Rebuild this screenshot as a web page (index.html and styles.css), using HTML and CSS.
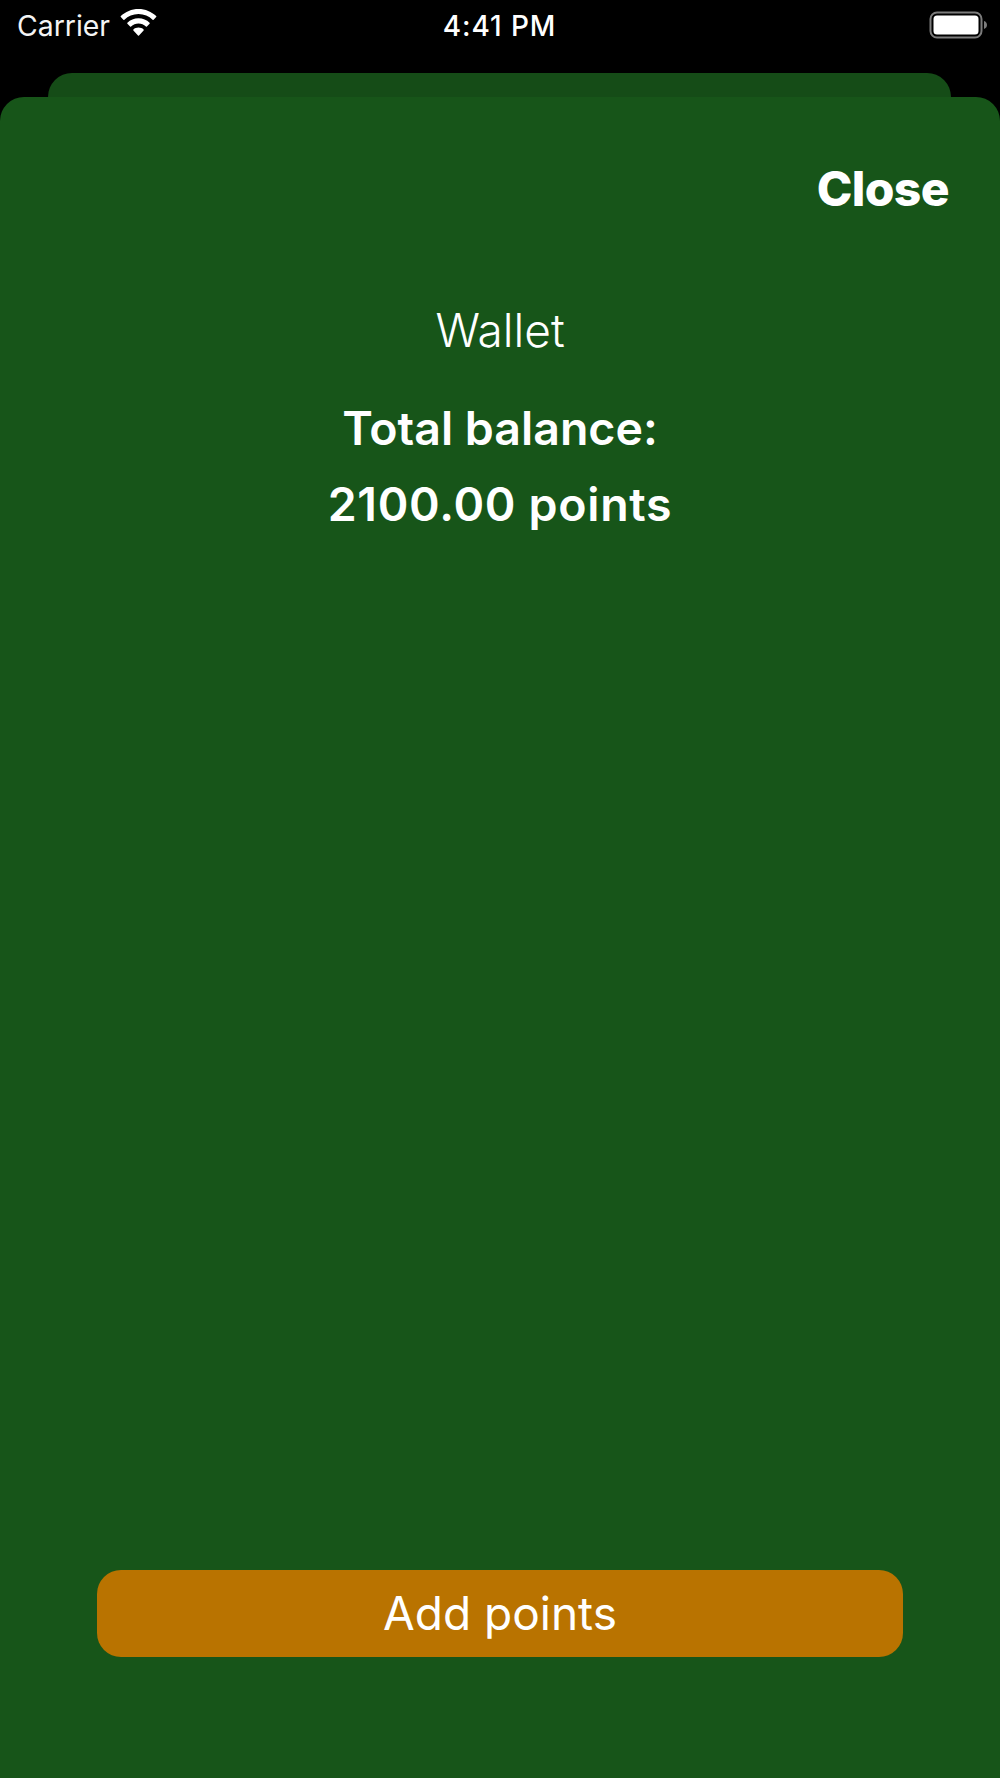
FILE: index.html
```html
<!DOCTYPE html>
<html lang="en">
<head>
<meta charset="utf-8">
<title>Wallet</title>
<link rel="stylesheet" href="styles.css">
</head>
<body>
<div class="screen">
  <header class="status">
    <div class="status-left">
      <span class="carrier">Carrier</span>
      <svg class="wifi" width="37" height="27" viewBox="0 0 37 27" aria-hidden="true">
        <path fill="#fff" d="M18.5 0C11.6 0 5.4 2.7.8 7.1c-.3.3-.3.7 0 1l2.6 2.7c.3.3.7.3 1 0C8 7.3 13 5.1 18.5 5.1s10.500 2.200 14.100 5.700c.3.3.7.3 1 0l2.600-2.700c.3-.3.3-.7 0-1C31.600 2.700 25.400 0 18.500 0z"/>
        <path fill="#fff" d="M18.500 9.300c-4.300 0-8.200 1.700-11.100 4.400-.3.3-.3.7 0 1l2.700 2.700c.3.3.7.3 1 0 2-1.800 4.600-2.900 7.400-2.900s5.400 1.100 7.400 2.900c.3.3.7.3 1 0l2.700-2.700c.3-.3.3-.7 0-1-2.900-2.700-6.800-4.400-11.100-4.400z"/>
        <path fill="#fff" d="M18.500 18.600c-2 0-3.800.7-5.100 1.900-.3.3-.3.7 0 1l4.600 4.900c.3.3.7.3 1 0l4.600-4.900c.3-.3.3-.7 0-1-1.300-1.200-3.100-1.900-5.100-1.900z"/>
      </svg>
    </div>
    <div class="time">4:41 PM</div>
    <div class="status-right">
      <svg class="battery" width="58" height="28" viewBox="0 0 58 28" aria-hidden="true">
        <rect x="1.500" y="1.500" width="51" height="25" rx="6.500" fill="none" stroke="#7c7c7c" stroke-width="2"/>
        <rect x="4.500" y="4.500" width="45" height="19" rx="3.500" fill="#fff"/>
        <path fill="#7c7c7c" d="M55 10c1.800.6 3 2.200 3 4s-1.200 3.400-3 4z"/>
      </svg>
    </div>
  </header>
  <div class="back-card"></div>
  <main class="sheet">
    <div class="close-row"><button class="close" type="button">Close</button></div>
    <h1 class="title">Wallet</h1>
    <p class="balance">Total balance:</p>
    <p class="balance amount">2100.00 points</p>
    <button class="add" type="button">Add points</button>
  </main>
</div>
</body>
</html>
```

FILE: styles.css
```css
* { box-sizing: border-box; }
html, body { margin: 0; height: 100%; }
body { background: #000; color: #fff; font-family: Inter, "Liberation Sans", sans-serif; }
.screen { width: 1000px; height: 1778px; display: flex; flex-direction: column; overflow: hidden; }
.status { height: 73px; padding: 10px 18px 0 17px; display: grid; grid-template-columns: 1fr auto 1fr; align-items: start; }
.status-left { display: flex; align-items: center; gap: 10px; height: 32px; }
.carrier { font-size: 28.400px; font-weight: 400; line-height: 32px; color: #f4f4f4; }
.wifi { margin-top: -8px; }
.time { font-size: 28px; font-weight: 500; line-height: 32px; letter-spacing: 0.900px; }
.status-right { display: flex; justify-content: flex-end; height: 32px; }
.battery { margin-top: 1px; margin-right: -5px; }
.back-card { height: 24px; margin: 0 49px 0 48px; background: #154c17; border-radius: 24px 24px 0 0; flex: none; }
.sheet { flex: 1; background: #175519; border-radius: 24px 24px 0 0; display: flex; flex-direction: column; align-items: center; padding: 0 97px 121px; }
.close-row { align-self: stretch; display: flex; justify-content: flex-end; margin-right: -46px; padding-top: 63px; }
.close { background: none; border: 0; padding: 0; color: #fff; font: 800 48px/58px Inter, "Liberation Sans", sans-serif; letter-spacing: -0.600px; }
.title { margin: 80px 0 0; font-size: 46px; font-weight: 300; line-height: 64px; }
.balance { margin: 0; font-size: 46.500px; font-weight: 600; line-height: 76px; }
.title + .balance { margin-top: 28px; }
.amount { letter-spacing: 0.700px; }
.add { margin-top: auto; width: 806px; height: 87px; border: 0; border-radius: 24px; background: #b97300; color: #fff; font: 400 46px/87px Inter, "Liberation Sans", sans-serif; padding: 0; }
```
